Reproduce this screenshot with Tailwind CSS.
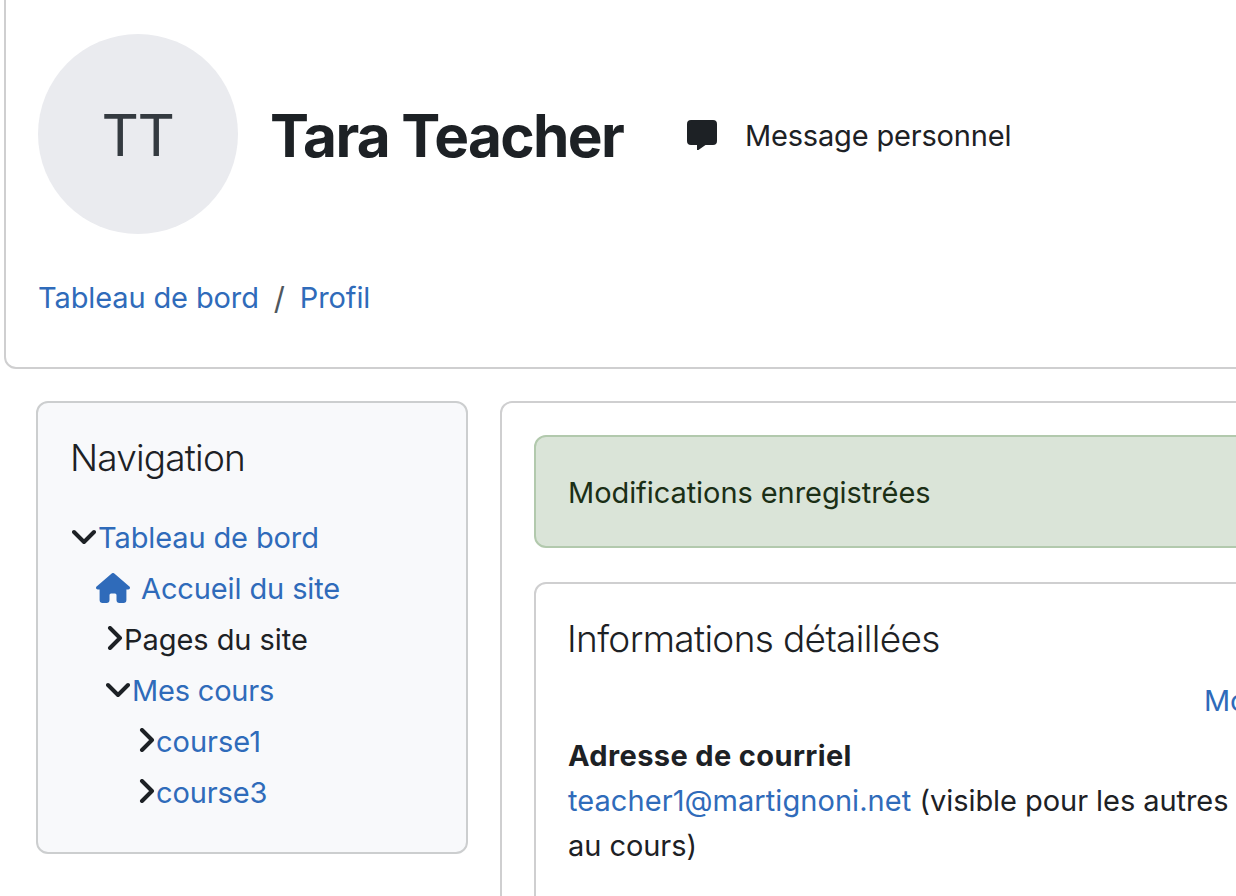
<!DOCTYPE html>
<html lang="fr">
<head>
  <meta charset="UTF-8" />
  <meta name="viewport" content="width=device-width, initial-scale=1.0" />
  <title>Tara Teacher : Profil</title>
  <script src="https://cdn.jsdelivr.net/npm/@tailwindcss/browser@4"></script>
</head>
<body class="bg-white font-['Inter',sans-serif] text-[29px] tracking-[-0.12px] text-[#1d2125] h-[896px] w-[1236px] overflow-hidden">

  <!-- page header -->
  <header class="ml-1 -mt-3 h-[381px] w-[1260px] rounded-xl border-2 border-[#cfcfd0] pl-8 pt-11">
    <div class="flex h-[200px] items-center whitespace-nowrap">
      <div class="flex size-[200px] shrink-0 items-center justify-center rounded-full bg-[#eaebef]">
        <span class="pr-px pt-0.5 text-[58px] font-normal tracking-[-1.5px] text-[#343a40]">TT</span>
      </div>
      <h1 class="ml-8 w-[417px] shrink-0 pt-[3px] text-[58.5px] font-bold tracking-[-1.65px]">Tara Teacher</h1>
      <svg class="mt-px size-[30px] shrink-0" viewBox="0 0 30 30" fill="#1d2125">
        <path d="M4 0h22a4 4 0 0 1 4 4v17a4 4 0 0 1-4 4h-7.500l-7.500 5.300a.6.6 0 0 1-1-.5V25H4a4 4 0 0 1-4-4V4a4 4 0 0 1 4-4z" />
      </svg>
      <span class="ml-7 pt-1 tracking-[-0.18px]">Message personnel</span>
    </div>
    <nav class="mt-[42px] flex h-11 items-center whitespace-nowrap">
      <a class="text-[#2f6bba]">Tableau de bord</a>
      <span class="ml-[15px] mr-3.5 w-3 pt-0.5 text-[31px] text-[#4f575e]">/</span>
      <a class="text-[#2f6bba]">Profil</a>
    </nav>
  </header>

  <div class="ml-9 mt-8 flex items-start gap-8">
    <aside class="h-[453px] w-[432px] shrink-0 whitespace-nowrap rounded-xl border-2 border-[#cccecf] bg-[#f8f9fb] pl-8 pt-[31px]">
      <h2 class="h-12 text-[37px] font-light leading-[48px] tracking-[-0.8px]">Navigation</h2>
      <ul class="mt-[29px] leading-[51px] text-[#2f6bba]">
        <li class="flex h-[51px] items-center">
          <svg class="ml-0.5 mr-0.5 size-6" viewBox="0 0 24 24" fill="none" stroke="#1d2125" stroke-width="4" stroke-linecap="round" stroke-linejoin="round"><path d="M2 7l10 10L22 7" /></svg>
          <span class="pt-0.5">Tableau de bord</span>
        </li>
        <li class="flex h-[51px] items-center pl-[26px]">
          <svg class="h-[30px] w-[34px]" viewBox="0 0 34 30" fill="#2f6bba"><path d="M15.700.5a2 2 0 0 1 2.600 0L33.400 13.500c1.200 1.100.4 3-1.200 3H30.400V27a3 3 0 0 1-3 3H23.500a3 3 0 0 1-3-3V22a1.500 1.500 0 0 0-1.500-1.500h-4a1.500 1.500 0 0 0-1.500 1.500v5a3 3 0 0 1-3 3H6.600a3 3 0 0 1-3-3V16.500H1.800c-1.600 0-2.400-1.900-1.200-3z" /></svg>
          <span class="ml-[11px] pt-0.5">Accueil du site</span>
        </li>
        <li class="flex h-[51px] items-center pl-[37px] text-[#1d2125]">
          <svg class="-mt-0.5 h-6 w-[17px]" viewBox="0 0 17 24" fill="none" stroke="#1d2125" stroke-width="4" stroke-linecap="round" stroke-linejoin="round"><path d="M3 2l10 10L3 22" /></svg>
          <span class="pt-0.5 tracking-[-0.05px]">Pages du site</span>
        </li>
        <li class="flex h-[51px] items-center pl-9">
          <svg class="mr-0.5 size-6" viewBox="0 0 24 24" fill="none" stroke="#1d2125" stroke-width="4" stroke-linecap="round" stroke-linejoin="round"><path d="M2 7l10 10L22 7" /></svg>
          <span class="pt-0.5 tracking-[-0.2px]">Mes cours</span>
        </li>
        <li class="flex h-[51px] items-center pl-[69px]">
          <svg class="-mt-0.5 h-6 w-[17px]" viewBox="0 0 17 24" fill="none" stroke="#1d2125" stroke-width="4" stroke-linecap="round" stroke-linejoin="round"><path d="M3 2l10 10L3 22" /></svg>
          <span class="pt-0.5 tracking-normal">course1</span>
        </li>
        <li class="flex h-[51px] items-center pl-[69px]">
          <svg class="-mt-0.5 h-6 w-[17px]" viewBox="0 0 17 24" fill="none" stroke="#1d2125" stroke-width="4" stroke-linecap="round" stroke-linejoin="round"><path d="M3 2l10 10L3 22" /></svg>
          <span class="pt-0.5">course3</span>
        </li>
      </ul>
    </aside>

    <main class="h-[520px] w-[800px] shrink-0 whitespace-nowrap rounded-xl border-2 border-[#cfcfd0] pl-8 pt-8">
      <div class="flex h-[113px] items-center rounded-xl border-2 border-[#b2c9ad] bg-[#dae4d8] pl-8 pt-0.5 tracking-[-0.07px] text-[#1b2f16]">Modifications enregistrées</div>
      <section class="mt-[34px] h-[400px] rounded-xl border-2 border-[#cfcfd0] pl-8 pt-[31px]">
        <h2 class="-ml-px h-12 text-[37px] font-light leading-[48px] tracking-[-0.65px]">Informations détaillées</h2>
        <div class="mt-[15px] h-[45px] pl-[636px] leading-[45px] text-[#2f6bba]">Modifier le profil</div>
        <dl class="mt-2.5 leading-[45px] tracking-normal">
          <dt class="font-bold tracking-[0.38px]">Adresse de courriel</dt>
          <dd><a class="tracking-[0.06px] text-[#2f6bba]">teacher1@martignoni.net</a> <span class="tracking-[-0.06px]">(visible pour les autres<br />au cours)</span></dd>
        </dl>
      </section>
    </main>
  </div>

</body>
</html>
